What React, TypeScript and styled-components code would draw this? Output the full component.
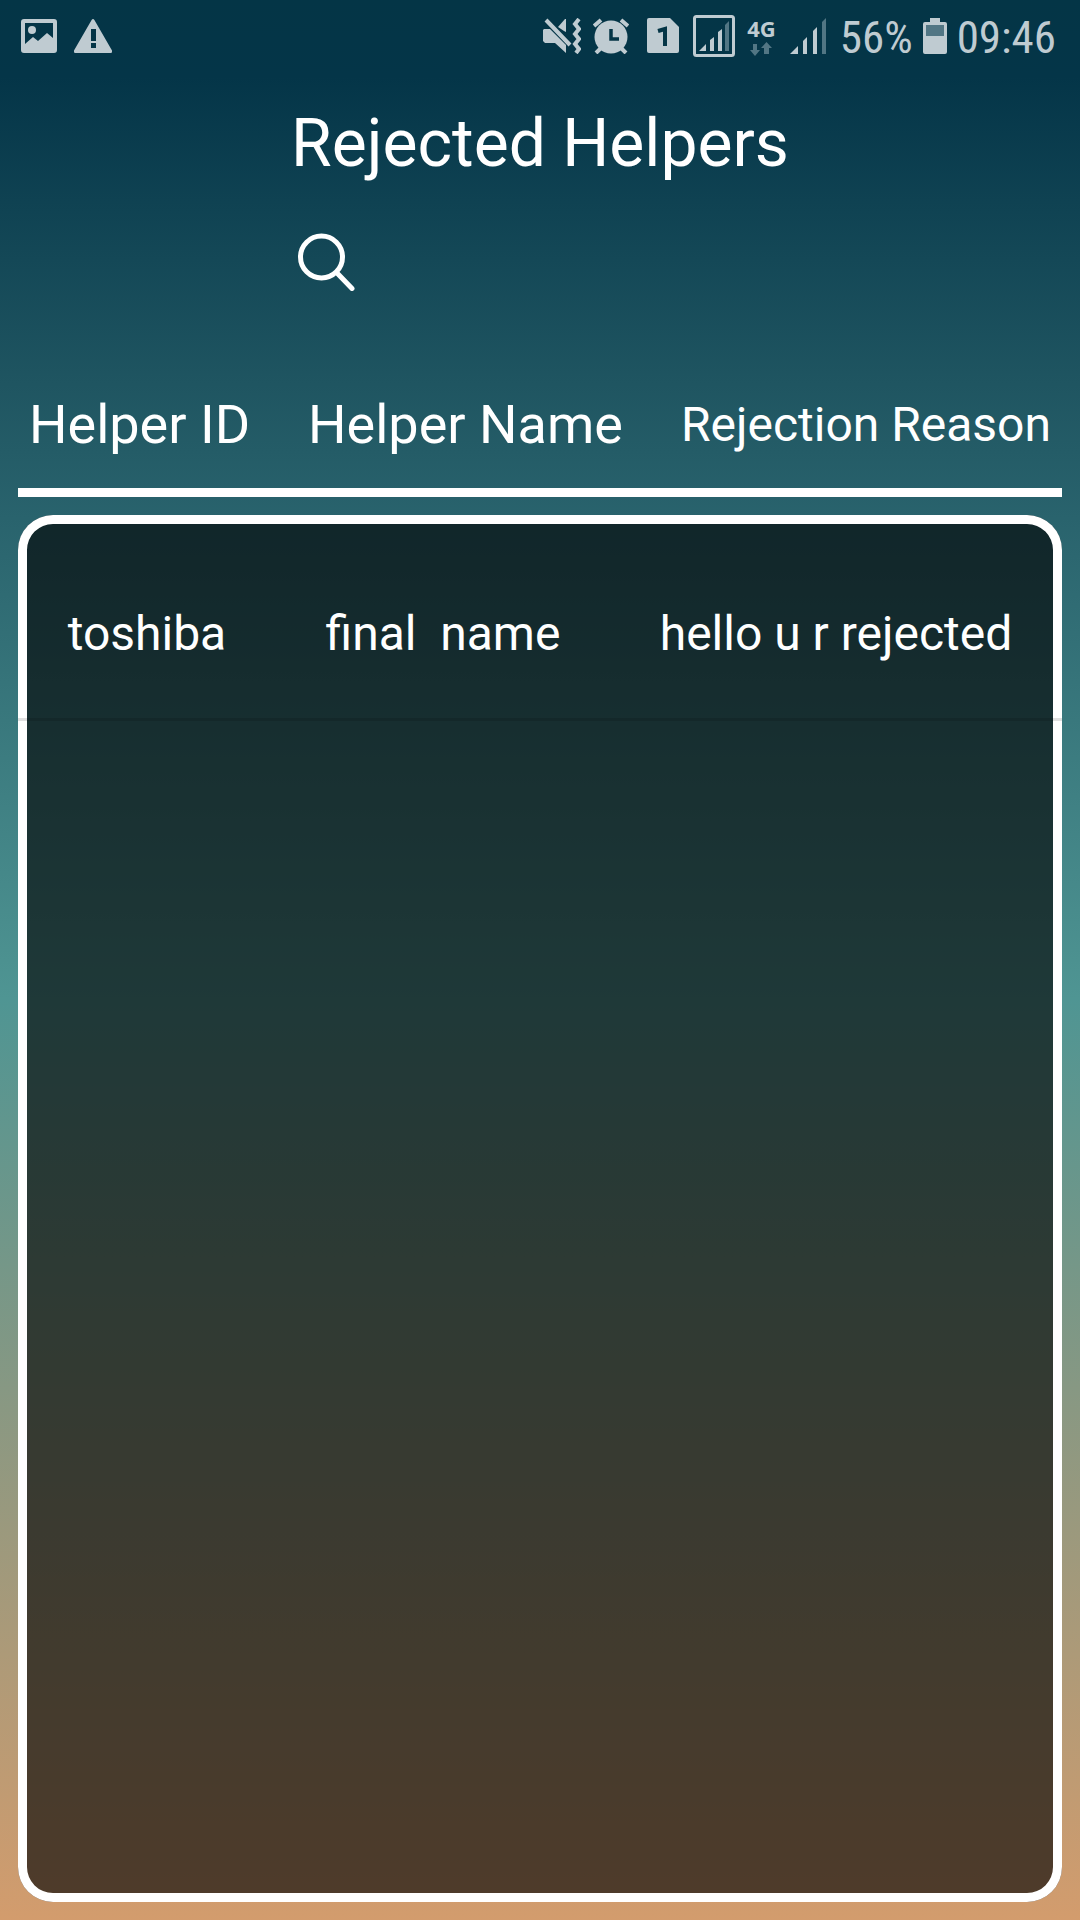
import React from "react";
import styled, { createGlobalStyle } from "styled-components";

const GlobalStyle = createGlobalStyle`
  * { box-sizing: border-box; }
  body { margin: 0; font-family: Roboto, sans-serif; color: #fff; }
`;

const Screen = styled.div`
  display: flex;
  flex-direction: column;
  min-height: 100vh;
  padding-bottom: 18px;
  background: linear-gradient(
    #043546 0,
    #043548 4%,
    #1f5561 20%,
    #29636d 27%,
    #4f9593 52%,
    #d39c6d 100%
  );
`;

const StatusBar = styled.header`
  display: flex;
  align-items: center;
  justify-content: space-between;
  height: 72px;
  padding: 0 24px 0 21px;
  color: #bfcbd1;
`;

const StatusGroup = styled.div<{ $gap: number }>`
  display: flex;
  align-items: center;
  gap: ${(p) => p.$gap}px;
`;

const StatusText = styled.span`
  padding-top: 3px;
  font-family: "Roboto Condensed", Roboto, sans-serif;
  font-size: 45px;
  line-height: 54px;
`;

const Glyph = styled.svg`
  display: block;
  flex: none;
  fill: currentColor;
`;

const Network = styled.div`
  display: flex;
  flex-direction: column;
  align-items: center;
  gap: 3px;
  font: bold 22px/22px "Noto Sans", sans-serif;
`;

const Title = styled.h1`
  margin: 33px 0 0;
  font-size: 66px;
  line-height: 78px;
  font-weight: 400;
  text-align: center;
`;

const SearchButton = styled.button`
  align-self: flex-start;
  display: flex;
  margin: 44px 0 0 27%;
  padding: 6px;
  border: 0;
  background: none;
  color: #fff;
  cursor: pointer;
`;

const Table = styled.table`
  flex: 1;
  display: flex;
  flex-direction: column;
  margin-top: 83px;
`;

const Head = styled.thead`
  display: block;

  &::after {
    content: "";
    display: block;
    height: 9px;
    margin: 0 18px 18px;
    background: #fff;
  }
`;

const HeadRow = styled.tr`
  display: flex;
  align-items: center;
  justify-content: space-around;
  height: 108px;
  padding-bottom: 18px;
`;

const HeadCell = styled.th<{ $size: number }>`
  padding: 0;
  font-size: ${(p) => p.$size}px;
  line-height: 64px;
  font-weight: 400;
  white-space: nowrap;
`;

const Body = styled.tbody`
  flex: 1;
  display: block;
  margin: 0 18px;
  border-radius: 35px;
  background: rgba(3, 3, 3, 0.63);
  box-shadow: inset 0 0 0 9px #fff;
`;

const BodyRow = styled.tr`
  display: flex;
  align-items: center;
  justify-content: space-around;
  height: 206px;
  padding-top: 34px;
  border-bottom: 3px solid rgba(0, 0, 0, 0.12);
`;

const BodyCell = styled.td`
  padding: 0;
  font-size: 48px;
  line-height: 58px;
  white-space: pre;
`;

const columns = [
  { label: "Helper ID", size: 54 },
  { label: "Helper Name", size: 54 },
  { label: "Rejection Reason", size: 48 },
];

const helpers = [{ id: "toshiba", name: "final  name", reason: "hello u r rejected" }];

const PictureIcon = () => (
  <Glyph width="36" height="34" viewBox="0 0 36 34">
    <path
      fillRule="evenodd"
      d="M3 0h30q3 0 3 3v28q0 3-3 3H3q-3 0-3-3V3q0-3 3-3zM4 4v21l8-7 5 4 9-8 6 5V4z"
    />
    <circle cx="11" cy="11" r="4" />
  </Glyph>
);

const WarningIcon = () => (
  <Glyph width="38" height="34" viewBox="0 0 38 34">
    <path
      fillRule="evenodd"
      d="M17.6 1q1.4-2 2.8 0L38 31.5q.6 2-1.2 2.5H1.2q-1.8-.5-1.2-2.5zM17 10v12h5V10zM17 24v5h5v-5z"
    />
  </Glyph>
);

const MuteIcon = () => (
  <Glyph width="38" height="36" viewBox="0 0 38 36">
    <path d="M1 11h6l16 16v8L12 25H2l-2-2V12zM15 9l7-8h1v13l-2-1z" />
    <path
      d="M3 2l24 25M36 1l-4 5 4 5-4 5 4 5-4 5 4 5-3 4"
      fill="none"
      stroke="currentColor"
      strokeWidth="4"
    />
  </Glyph>
);

const AlarmIcon = () => (
  <Glyph width="36" height="36" viewBox="0 0 36 36">
    <path d="M1 8l7-6M35 8l-7-6M3 35l6-6M33 35l-6-6" stroke="currentColor" strokeWidth="4" />
    <circle cx="18" cy="19" r="16.5" />
    <path d="M18 11v10h8" fill="none" stroke="#043546" strokeWidth="3.5" />
  </Glyph>
);

const SimIcon = () => (
  <Glyph width="32" height="36" viewBox="0 0 32 36">
    <path d="M2 0h21l9 9v24q0 2-2 2H2q-2 0-2-2V2q0-2 2-2z" />
    <path d="M11 13l7-2v17" fill="none" stroke="#043546" strokeWidth="4" />
  </Glyph>
);

const BoxedSignalIcon = () => (
  <Glyph width="42" height="42" viewBox="0 0 42 42">
    <rect x="1.5" y="1.5" width="39" height="39" rx="2" fill="none" stroke="currentColor" strokeWidth="3" />
    <path d="M6 36h7v-7zM17 36h4V22l-4 3zM25 36h4V14l-4 3z" />
    <path d="M32 36h4V6l-4 4z" fill="#527684" />
  </Glyph>
);

const SignalIcon = () => (
  <Glyph width="36" height="36" viewBox="0 0 36 36">
    <path d="M0 36h8v-8zM13 36h4V19l-4 4zM23 36h4V9l-4 4z" />
    <path d="M32 36h4V0l-4 4z" fill="#527684" />
  </Glyph>
);

const DataArrowsIcon = () => (
  <Glyph width="22" height="14" viewBox="0 0 22 14">
    <path d="M3 2h4v6h3l-5 6-5-6h3zM14 12h5V6h3l-5.500-6L11 6h3z" fill="#527684" />
  </Glyph>
);

const BatteryIcon = () => (
  <Glyph width="24" height="36" viewBox="0 0 24 36">
    <path d="M7 0h10v4h5q2 0 2 2v28q0 2-2 2H2q-2 0-2-2V6q0-2 2-2h5z" />
    <path d="M3 7h18v11H3z" fill="#527684" />
  </Glyph>
);

const SearchIcon = () => (
  <Glyph width="58" height="58" viewBox="0 0 58 58">
    <g fill="none" stroke="currentColor" strokeWidth="5" strokeLinecap="round">
      <circle cx="23.5" cy="24" r="21" />
      <path d="M40 41l14 14.5" />
    </g>
  </Glyph>
);

export default function App() {
  return (
    <Screen>
      <GlobalStyle />
      <StatusBar>
        <StatusGroup $gap={17}>
          <PictureIcon />
          <WarningIcon />
        </StatusGroup>
        <StatusGroup $gap={18}>
          <StatusGroup $gap={12}>
            <MuteIcon />
            <AlarmIcon />
          </StatusGroup>
          <StatusGroup $gap={14}>
            <SimIcon />
            <StatusGroup $gap={12}>
              <BoxedSignalIcon />
              <Network>
                4G
                <DataArrowsIcon />
              </Network>
            </StatusGroup>
            <SignalIcon />
            <StatusGroup $gap={10}>
              <StatusText>56%</StatusText>
              <BatteryIcon />
              <StatusText>09:46</StatusText>
            </StatusGroup>
          </StatusGroup>
        </StatusGroup>
      </StatusBar>
      <Title>Rejected Helpers</Title>
      <SearchButton type="button" aria-label="Search helpers">
        <SearchIcon />
      </SearchButton>
      <Table>
        <Head>
          <HeadRow>
            {columns.map((c) => (
              <HeadCell key={c.label} $size={c.size} scope="col">
                {c.label}
              </HeadCell>
            ))}
          </HeadRow>
        </Head>
        <Body>
          {helpers.map((h) => (
            <BodyRow key={h.id}>
              <BodyCell>{h.id}</BodyCell>
              <BodyCell>{h.name}</BodyCell>
              <BodyCell>{h.reason}</BodyCell>
            </BodyRow>
          ))}
        </Body>
      </Table>
    </Screen>
  );
}
